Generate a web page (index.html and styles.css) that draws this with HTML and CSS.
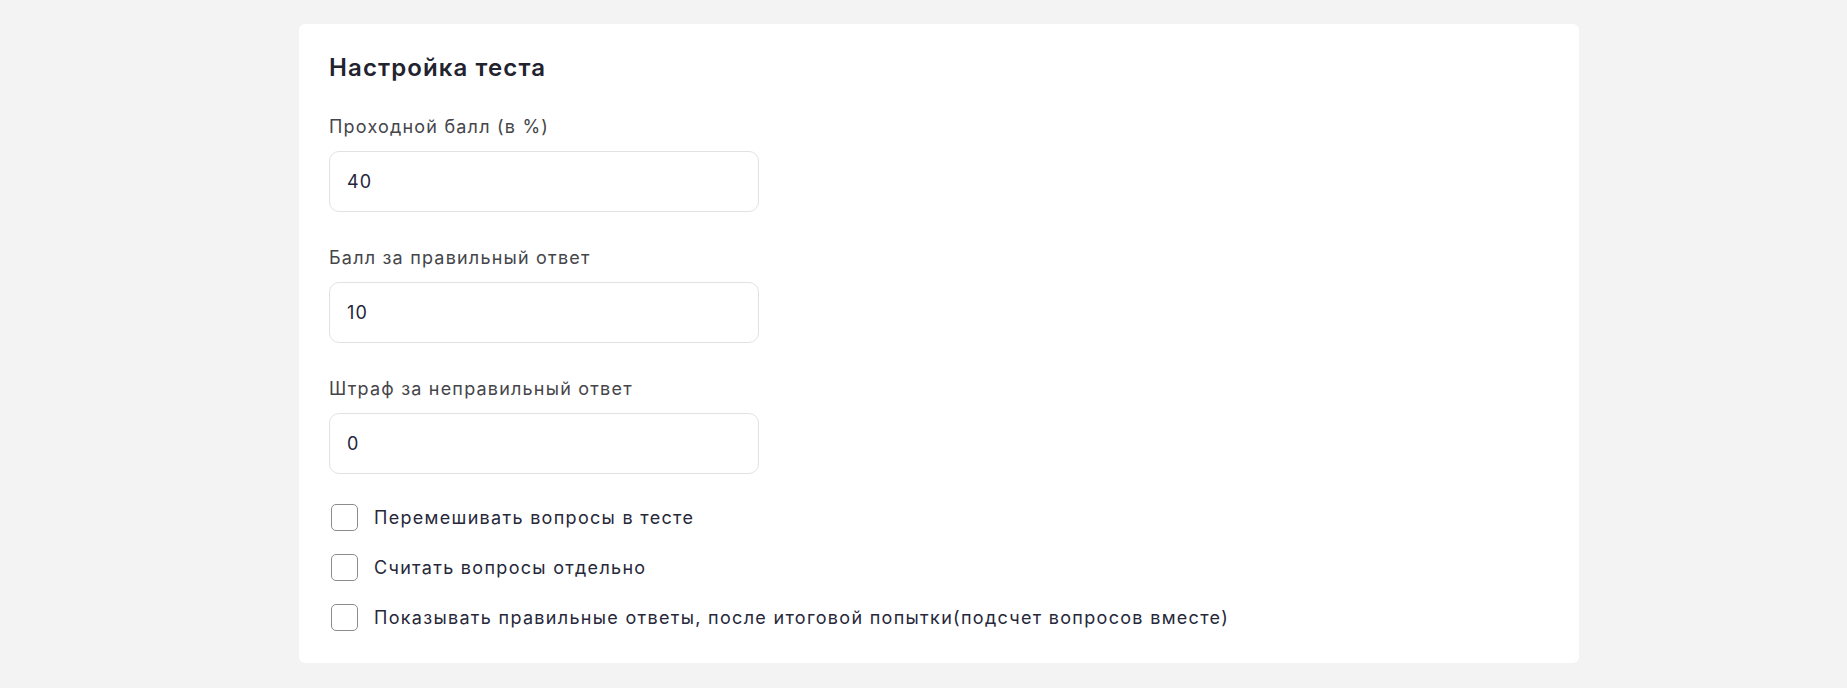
FILE: index.html
```html
<!DOCTYPE html>
<html lang="ru">
<head>
<meta charset="utf-8">
<title>Настройка теста</title>
<link rel="stylesheet" href="styles.css">
</head>
<body>
<main class="page">
  <section class="card">
    <h2 class="card-title">Настройка теста</h2>
    <div class="field">
      <label class="field-label">Проходной балл (в %)</label>
      <input class="field-input" type="text" value="40">
    </div>
    <div class="field">
      <label class="field-label">Балл за правильный ответ</label>
      <input class="field-input" type="text" value="10">
    </div>
    <div class="field">
      <label class="field-label">Штраф за неправильный ответ</label>
      <input class="field-input" type="text" value="0">
    </div>
    <div class="checks">
      <label class="check"><span class="box"></span><span class="check-text">Перемешивать вопросы в тесте</span></label>
      <label class="check"><span class="box"></span><span class="check-text">Считать вопросы отдельно</span></label>
      <label class="check"><span class="box"></span><span class="check-text">Показывать правильные ответы, после итоговой попытки(подсчет вопросов вместе)</span></label>
    </div>
  </section>
</main>
</body>
</html>
```

FILE: styles.css
```css
* { box-sizing: border-box; }
html, body {
  margin: 0;
  background: #f3f3f3;
  font-family: Inter, "Noto Sans", sans-serif;
}
.page {
  padding: 24px 0 0 299px;
}
.card {
  width: 1280px;
  height: 639px;
  background: #ffffff;
  border-radius: 6px;
  padding: 28px 30px 0 30px;
}
.card-title {
  margin: 0;
  font-size: 24px;
  line-height: 32px;
  font-weight: 600;
  letter-spacing: 1.1px;
  color: #22232f;
}
.field {
  display: flex;
  flex-direction: column;
  margin-top: 29px;
}
.field + .field { margin-top: 32px; }
.field-label {
  font-size: 18px;
  line-height: 27px;
  letter-spacing: 1.2px;
  color: #45454a;
  margin-bottom: 11px;
}
.field-input {
  width: 430px;
  height: 61px;
  border: 1px solid #e2e2e4;
  border-radius: 10px;
  padding: 0 17px;
  font-family: inherit;
  font-size: 18px;
  letter-spacing: 1.1px;
  color: #24253a;
  background: #fff;
  outline: none;
}
.checks {
  display: flex;
  flex-direction: column;
  gap: 23px;
  margin-top: 30px;
  padding-left: 2px;
}
.check {
  display: flex;
  align-items: center;
  gap: 16px;
  height: 27px;
}
.box {
  width: 27px;
  height: 27px;
  border: 1.5px solid #8c8c8c;
  border-radius: 5px;
  flex: none;
}
.check-text {
  font-size: 18px;
  line-height: 27px;
  letter-spacing: 1.3px;
  color: #27283a;
}
```
